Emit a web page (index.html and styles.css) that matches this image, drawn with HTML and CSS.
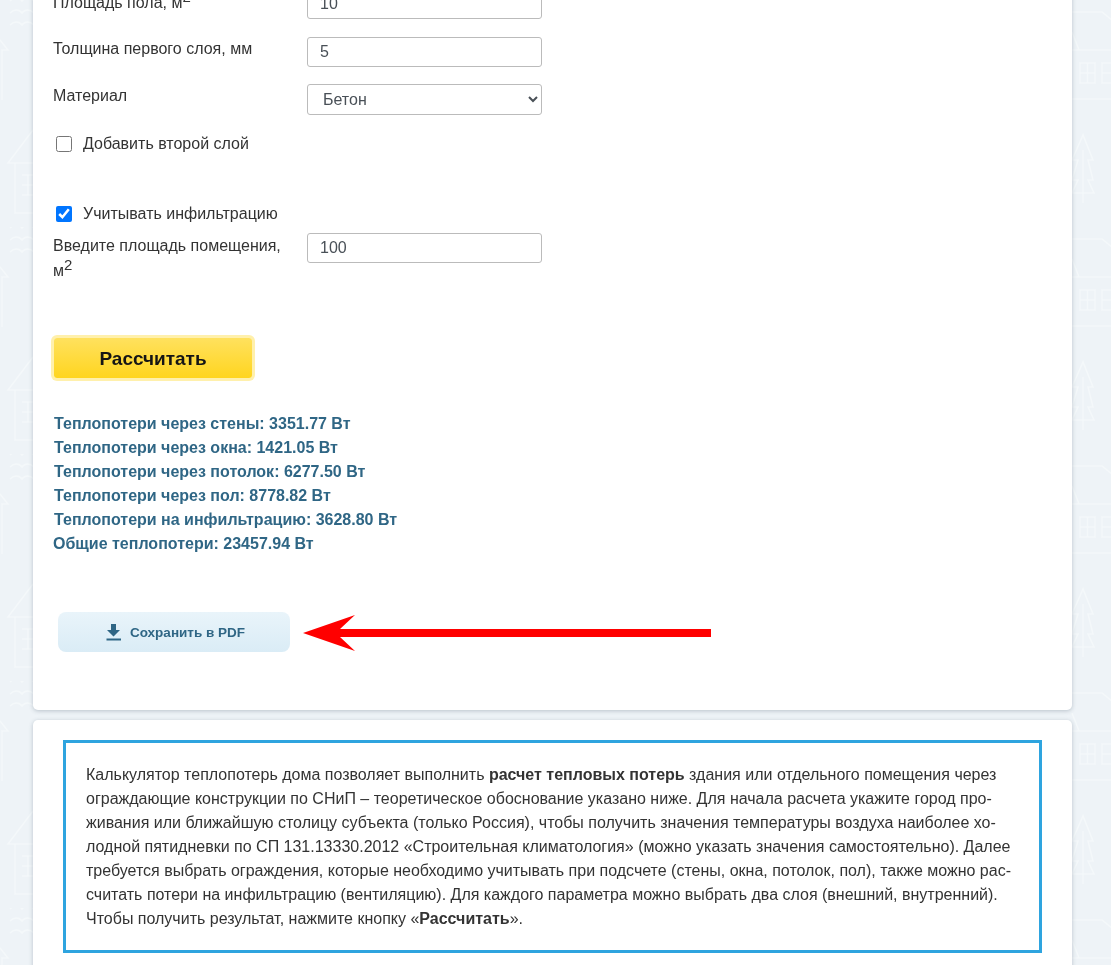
FILE: index.html
```html
<!DOCTYPE html>
<html lang="ru">
<head>
    <meta charset="UTF-8">
    <meta name="viewport" content="width=device-width, initial-scale=1.0">
    <title>Калькулятор теплопотерь</title>
    <link rel="stylesheet" href="styles.css">
</head>
<body>

<svg class="page-bg" width="1111" height="965" aria-hidden="true">
    <defs>
        <pattern id="houses" width="1111" height="227" patternUnits="userSpaceOnUse">
            <g fill="none" stroke="#f4f8fa" stroke-width="1.5">
                <!-- left column -->
                <path d="M10 1c4-4 9-4 12 0 3-4 8-4 12 0M10 13c4-4 9-4 12 0 3-4 8-4 12 0M10 25c4-4 9-4 12 0 3-4 8-4 12 0"/>
                <path d="M0 40l8 10H2v50"/>
                <path d="M33 130L8 163h25M15 163v50h18M22 175h11M22 185h11M22 195h11M28 175v20"/>
                <!-- right column -->
                <path d="M1072 12h30l20 16M1072 32l7 18M1072 50h39M1072 99h39"/>
                <path d="M1080 63h15v20h-15zM1087.5 63v20M1080 73h15M1102 63h15v20h-15zM1102 73h15"/>
                <path d="M1083 135l-11 25h6l-6 20h6l-6 13h22l-6-13h5l-5-20h5zM1083 150v53"/>
            </g>
        </pattern>
    </defs>
    <rect width="1111" height="965" fill="url(#houses)"/>
</svg>

<div class="page">
    <section class="card calc-card">
        <form class="calc-form">
            <div class="form-row first-row">
                <label class="form-label">Площадь пола, м<sup>2</sup></label>
                <input class="form-input" type="text" value="10">
            </div>
            <div class="form-row">
                <label class="form-label">Толщина первого слоя, мм</label>
                <input class="form-input" type="text" value="5">
            </div>
            <div class="form-row">
                <label class="form-label">Материал</label>
                <select class="form-input form-select">
                    <option>Бетон</option>
                </select>
            </div>
            <label class="check-row check-second">
                <input type="checkbox">
                <span>Добавить второй слой</span>
            </label>
            <label class="check-row check-infil">
                <input type="checkbox" checked>
                <span>Учитывать инфильтрацию</span>
            </label>
            <div class="form-row area-row">
                <label class="form-label">Введите площадь помещения, м<sup>2</sup></label>
                <input class="form-input" type="text" value="100">
            </div>
            <button class="calc-button" type="button">Рассчитать</button>
        </form>

        <div class="results">
            <div>Теплопотери через стены: 3351.77 Вт</div>
            <div>Теплопотери через окна: 1421.05 Вт</div>
            <div>Теплопотери через потолок: 6277.50 Вт</div>
            <div>Теплопотери через пол: 8778.82 Вт</div>
            <div>Теплопотери на инфильтрацию: 3628.80 Вт</div>
            <div class="results-total">Общие теплопотери: 23457.94 Вт</div>
        </div>

        <div class="pdf-row">
            <button class="pdf-button" type="button">
                <svg class="pdf-icon" width="16" height="18" viewBox="0 0 16 18">
                    <path d="M5 1h5v6h4l-6.5 6.5L1 7h4z" fill="#2f6685"/>
                    <rect x="0.5" y="15.5" width="14.5" height="2" fill="#2f6685"/>
                </svg>
                Сохранить в PDF
            </button>
            <svg class="arrow" width="408" height="36" viewBox="0 0 408 36">
                <path d="M0 18L52 0 37 14H408V22H37L52 36z" fill="#ff0000"/>
            </svg>
        </div>
    </section>

    <section class="card text-card">
        <div class="intro-box">
            Калькулятор теплопотерь дома позволяет выполнить <b>расчет тепловых потерь</b> здания или отдельного помещения через<br>
            ограждающие конструкции по СНиП – теоретическое обоснование указано ниже. Для начала расчета укажите город про-<br>
            живания или ближайшую столицу субъекта (только Россия), чтобы получить значения температуры воздуха наиболее хо-<br>
            лодной пятидневки по СП 131.13330.2012 «Строительная климатология» (можно указать значения самостоятельно). Далее<br>
            требуется выбрать ограждения, которые необходимо учитывать при подсчете (стены, окна, потолок, пол), также можно рас-<br>
            считать потери на инфильтрацию (вентиляцию). Для каждого параметра можно выбрать два слоя (внешний, внутренний).<br>
            Чтобы получить результат, нажмите кнопку «<b>Рассчитать</b>».
        </div>
    </section>
</div>

</body>
</html>
```

FILE: styles.css
```css
html, body {
    margin: 0;
    height: 965px;
    overflow: hidden;
}
body {
    background-color: #eef3f7;
    color: #333;
    font-family: "Liberation Sans", Arial, sans-serif;
    font-size: 16px;
    line-height: 24px;
}
.page-bg {
    position: fixed;
    left: 0;
    top: 0;
    z-index: -1;
}
.page {
    width: 1039px;
    margin: -59px 0 0 33px;
}
.card {
    background-color: #fff;
    border-radius: 5px;
    box-shadow: 0 1px 4px rgba(60, 80, 100, 0.3);
}
.calc-card {
    height: 769px;
    padding: 48px 20px 0;
    box-sizing: border-box;
}
.form-row {
    display: grid;
    grid-template-columns: 254px 235px;
    margin-bottom: 17px;
}
.first-row {
    margin-bottom: 18px;
}
.form-label {
    color: #333;
    line-height: 25px;
    padding-right: 20px;
    margin-top: -1px;
}
.first-row .form-label {
    margin-top: 1px;
}
sup {
    font-size: 15px;
    line-height: 0;
}
.form-input {
    height: 30px;
    box-sizing: border-box;
    border: 1px solid #bbb;
    border-radius: 3px;
    padding: 0 12px;
    background-color: #fff;
    color: #495057;
    font-family: inherit;
    font-size: 16px;
}
.form-select {
    height: 31px;
    padding-left: 11px;
}
.check-row {
    display: flex;
    align-items: center;
    height: 24px;
    padding-left: 3px;
    color: #333;
}
.check-row input {
    width: 16px;
    height: 16px;
    margin: 0 11px 0 0;
}
.check-infil {
    margin-top: 46px;
    margin-bottom: 7px;
}
.area-row {
    margin-bottom: 0;
    height: 50px;
}
.area-row .form-label {
    margin-top: 0;
}
.calc-button {
    display: block;
    width: 198px;
    height: 40px;
    margin: 55px 0 0 1px;
    padding: 2px 0 0;
    border: none;
    border-radius: 3px;
    background: linear-gradient(#ffe15e, #ffd51f);
    box-shadow: 0 0 0 3px #fff0ac;
    color: #151515;
    font-family: inherit;
    font-size: 19px;
    font-weight: bold;
}
.results {
    margin-top: 34px;
    margin-left: 1px;
    color: #2f6685;
    font-size: 16px;
    font-weight: bold;
}
.results-total {
    margin-left: -1px;
}
.pdf-row {
    display: flex;
    align-items: center;
    gap: 13px;
    margin: 56px 0 0 5px;
}
.pdf-button {
    display: flex;
    align-items: center;
    justify-content: center;
    gap: 8px;
    width: 232px;
    height: 40px;
    padding: 0 0 0 3px;
    border: none;
    border-radius: 8px;
    background: linear-gradient(#e9f4fa, #daecf6);
    color: #2f6685;
    font-family: inherit;
    font-size: 13.5px;
    font-weight: bold;
}
.arrow {
    margin-top: 2px;
}
.text-card {
    margin-top: 10px;
    height: 300px;
    padding: 20px 30px;
    box-sizing: border-box;
}
.intro-box {
    height: 213px;
    box-sizing: border-box;
    border: 3px solid #2ea4df;
    padding: 20px 20px;
    color: #333;
    font-size: 16px;
    line-height: 24px;
    white-space: nowrap;
}
```
